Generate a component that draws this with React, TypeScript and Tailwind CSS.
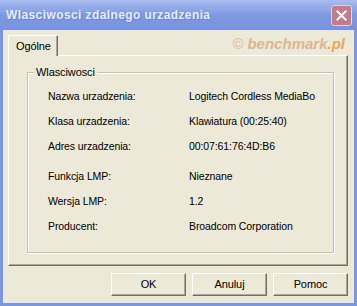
const rows = [
  { label: "Nazwa urzadzenia:", value: "Logitech Cordless MediaBo" },
  { label: "Klasa urzadzenia:", value: "Klawiatura (00:25:40)" },
  { label: "Adres urzadzenia:", value: "00:07:61:76:4D:B6" },
];

const rows2 = [
  { label: "Funkcja LMP:", value: "Nieznane" },
  { label: "Wersja LMP:", value: "1.2" },
  { label: "Producent:", value: "Broadcom Corporation" },
];

function Row({ label, value }: { label: string; value: string }) {
  return (
    <div className="flex h-[25px] items-center">
      <span className="w-[141px] shrink-0">{label}</span>
      <span className="whitespace-nowrap">{value}</span>
    </div>
  );
}

function XpButton({ children }: { children: string }) {
  return (
    <button className="h-[23px] w-[75px] border border-t-white border-l-white border-r-[#716f64] border-b-[#716f64] bg-[#ece9d8] text-[11px] text-black shadow-[inset_-1px_-1px_0_#aca899]">
      {children}
    </button>
  );
}

export default function App() {
  return (
    <div className="flex h-[306px] w-[357px] flex-col bg-[#7b97e0] font-['Liberation_Sans',Arial,sans-serif] text-[10.5px] tracking-[-0.1px] text-black">
      {/* title bar */}
      <div className="flex h-[30px] shrink-0 items-center justify-between bg-gradient-to-b from-[#a8bcf0] via-[#7d99e1] to-[#7893de] pl-[6px] pr-[5px]">
        <span className="text-[12px] font-bold tracking-[0.4px] text-[#e4ecfb] [text-shadow:1px_1px_0_#6a86d2]">
          Wlasciwosci zdalnego urzadzenia
        </span>
        <div className="flex h-[21px] w-[21px] items-center justify-center rounded-[3px] border border-[#e3d0d8] bg-[#c07d8c]">
          <svg width="11" height="11" viewBox="0 0 11 11">
            <path d="M1.5 1.5 L9.5 9.5 M9.5 1.5 L1.5 9.5" stroke="#fff" strokeWidth="2" strokeLinecap="square" />
          </svg>
        </div>
      </div>

      {/* body */}
      <div className="mx-[3px] mb-[3px] flex flex-1 flex-col bg-[#ece9d8] pl-[5px] pr-[6px] pt-[5px]">
        <div className="flex h-[20px] items-start justify-between">
          <div className="relative z-10 -mb-px flex h-[21px] w-[50px] items-center rounded-tl-[2px] border-l border-t border-r border-l-white border-t-white border-r-[#716f64] bg-[#ece9d8] pl-[7px] text-[11px] shadow-[inset_-1px_0_0_#aca899]">
            Ogólne
          </div>
          <span className="mr-[3px] mt-[1px] whitespace-nowrap text-[15px] font-bold italic leading-[16px] tracking-normal">
            <span className="text-[#e2c3a2]">© </span>
            <span className="text-[#deb68e]">benchmark</span>
            <span className="text-[#e9a85a]">.pl</span>
          </span>
        </div>

        <div className="h-[211px] border border-l-white border-t-white border-r-[#716f64] border-b-[#716f64] shadow-[inset_-1px_-1px_0_#aca899]">
          <div className="relative ml-[18px] mr-[13px] mt-[16px] h-[181px] border border-[#c5c2b2] pl-[20px] pt-[11px] shadow-[1px_1px_0_#fff,inset_1px_1px_0_#fff]">
            <span className="absolute left-[6px] top-[-8px] bg-[#ece9d8] px-[2px] text-[11px] leading-[14px]">
              Wlasciwosci
            </span>
            {rows.map((r) => (
              <Row key={r.label} {...r} />
            ))}
            <div className="h-[5px]" />
            {rows2.map((r) => (
              <Row key={r.label} {...r} />
            ))}
          </div>
        </div>

        <div className="mt-[7px] flex justify-end gap-[6px]">
          <XpButton>OK</XpButton>
          <XpButton>Anuluj</XpButton>
          <XpButton>Pomoc</XpButton>
        </div>
      </div>
    </div>
  );
}
